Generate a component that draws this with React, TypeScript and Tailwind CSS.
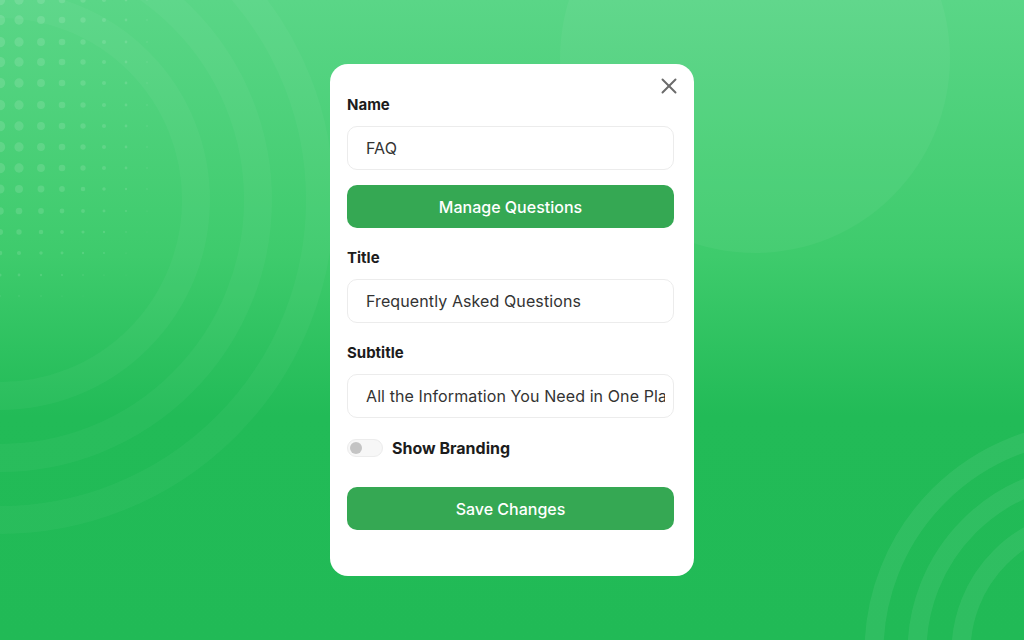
import { X } from "lucide-react";

const DOT_COLUMNS = [0, 19, 41, 62, 83, 104, 126, 147];
const DOT_ROWS = [0, 20, 42, 62, 83, 105, 126, 147, 168, 189, 211, 232, 253, 275, 296];

function getDotRadius(x: number, y: number) {
	const fadeX = Math.max(0, 1 - x / 172);
	const fadeY = y < 170 ? 1 : Math.max(0, (320 - y) / 150);
	return 5.2 * fadeX * fadeY;
}

function Backdrop() {
	return (
		<svg
			className="absolute inset-0 h-full w-full"
			viewBox="0 0 1024 640"
			preserveAspectRatio="none"
		>
			<circle cx="755" cy="58" r="195" fill="#ffffff" fillOpacity="0.045" />
			{[196, 258, 320].map((radius) => (
				<circle
					key={radius}
					cx="0"
					cy="200"
					r={radius}
					fill="none"
					stroke="#ffffff"
					strokeOpacity="0.035"
					strokeWidth="28"
				/>
			))}
			{[134, 178, 221].map((radius) => (
				<circle
					key={radius}
					cx="1095"
					cy="652"
					r={radius}
					fill="none"
					stroke="#ffffff"
					strokeOpacity="0.065"
					strokeWidth="19"
				/>
			))}
			{DOT_ROWS.map((y) =>
				DOT_COLUMNS.map((x) => {
					const radius = getDotRadius(x, y);
					if (radius < 0.4) return null;
					return (
						<circle
							key={`${x}-${y}`}
							cx={x}
							cy={y}
							r={radius}
							fill="#ffffff"
							fillOpacity="0.12"
						/>
					);
				}),
			)}
		</svg>
	);
}

function Field({ label, value }: { label: string; value: string }) {
	return (
		<label className="flex flex-col">
			<span className="h-5 text-[15px] font-bold leading-5 text-[#1c1c1c]">{label}</span>
			<input
				readOnly
				value={value}
				className="mt-[11px] h-[44px] w-full rounded-[10px] border border-[#ececec] bg-white pl-[18px] pr-2 text-[16px] tracking-[0.1px] text-[#333333] outline-none"
			/>
		</label>
	);
}

function GreenButton({ children }: { children: string }) {
	return (
		<button
			type="button"
			className="flex h-[43px] w-full items-center justify-center rounded-[10px] bg-[#35a853] text-[16px] font-medium text-white"
		>
			{children}
		</button>
	);
}

export default function App() {
	return (
		<div
			className="relative flex h-[640px] w-[1024px] items-center justify-center overflow-hidden bg-[linear-gradient(180deg,#5ad687_0%,#3ecb6c_40%,#22bb57_65%,#21ba56_100%)]"
			style={{ fontFamily: "Inter, 'Noto Sans', sans-serif" }}
		>
			<Backdrop />
			<div className="relative flex h-[512px] w-[364px] flex-col rounded-[18px] bg-white pl-[17px] pr-[20px] pt-[31px]">
				<button
					type="button"
					className="absolute right-[12px] top-[9px] text-[#6b6b6b]"
				>
					<X className="size-[26px]" strokeWidth={1.8} />
				</button>
				<Field label="Name" value="FAQ" />
				<div className="mt-[15px]">
					<GreenButton>Manage Questions</GreenButton>
				</div>
				<div className="mt-[20px]">
					<Field label="Title" value="Frequently Asked Questions" />
				</div>
				<div className="mt-[20px]">
					<Field label="Subtitle" value="All the Information You Need in One Place" />
				</div>
				<div className="mt-[20px] flex h-5 items-center gap-[9px]">
					<div className="flex h-[18px] w-[36px] items-center rounded-full border border-[#ececec] bg-[#f7f7f7] pl-[2px]">
						<span className="size-[12px] rounded-full bg-[#c4c4c4]" />
					</div>
					<span className="text-[16px] font-bold text-[#1c1c1c]">Show Branding</span>
				</div>
				<div className="mt-[29px]">
					<GreenButton>Save Changes</GreenButton>
				</div>
			</div>
		</div>
	);
}
